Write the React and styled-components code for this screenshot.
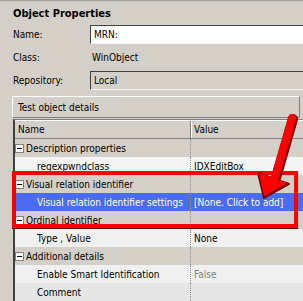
import styled, { createGlobalStyle } from "styled-components";

const GlobalStyle = createGlobalStyle`
  body {
    margin: 0;
    background: #d4d0c8;
    font-family: "DejaVu Sans Condensed", "Liberation Sans", sans-serif;
    font-size: 10px;
    color: #000;
  }
`;

const rows = [
  { type: "group", name: "Description properties" },
  { type: "item", name: "regexpwndclass", value: "IDXEditBox", bg: "#f4f4f4" },
  { type: "group", name: "Visual relation identifier" },
  { type: "item", name: "Visual relation identifier settings", value: "[None. Click to add]", selected: true },
  { type: "group", name: "Ordinal identifier" },
  { type: "item", name: "Type , Value", value: "None", bg: "#f0f0f0" },
  { type: "group", name: "Additional details" },
  { type: "item", name: "Enable Smart Identification", value: "False", muted: true, bg: "#f0f0f0" },
  { type: "item", name: "Comment", value: "", bg: "#e6e6e6" },
];

export default function App() {
  return (
    <>
      <GlobalStyle />
      <Page>
        <TopRule />
        <Title>Object Properties</Title>
        <Form>
          <Label>Name:</Label>
          <Input $editable>MRN:</Input>
          <Label>Class:</Label>
          <Plain>WinObject</Plain>
          <Label>Repository:</Label>
          <Input>Local</Input>
        </Form>
        <Panel>
          <PanelHeader>Test object details</PanelHeader>
          <Grid>
            <HeaderRow>
              <HeaderCell $first>Name</HeaderCell>
              <HeaderCell>Value</HeaderCell>
            </HeaderRow>
            {rows.map((r) => (
              <Row key={r.name} $bg={r.type === "group" ? "#d4d0c8" : r.selected ? "#4a6cf2" : r.bg}>
                <NameCell $indent={r.type === "item"} $selected={r.selected}>
                  {r.type === "group" && <Toggle />}
                  {r.name}
                </NameCell>
                <ValueCell $muted={r.muted} $selected={r.selected}>
                  {r.value}
                </ValueCell>
              </Row>
            ))}
          </Grid>
        </Panel>
        <Highlight />
        <Arrow viewBox="0 0 303 301">
          <line x1="293" y1="119" x2="276" y2="178" stroke="#7a0000" strokeWidth="10" strokeLinecap="round" />
          <polygon points="258,173 289,184 264,198" fill="#7a0000" stroke="#7a0000" strokeWidth="2" strokeLinejoin="round" />
          <line x1="292" y1="118" x2="275" y2="177" stroke="#ff0000" strokeWidth="8" strokeLinecap="round" />
          <polygon points="259,173 287,183 264,196" fill="#ff0000" />
        </Arrow>
      </Page>
    </>
  );
}

const Page = styled.div`
  position: relative;
  width: 303px;
  height: 301px;
  overflow: hidden;
`;

const TopRule = styled.div`
  height: 1px;
  background: #a0a0a0;
  border-bottom: 1px solid #c8c4bc;
`;

const Title = styled.div`
  height: 23px;
  line-height: 23px;
  padding-left: 13px;
  font-size: 11px;
  font-weight: bold;
`;

const Form = styled.div`
  display: grid;
  grid-template-columns: 77px 1fr;
  grid-auto-rows: 19px;
  row-gap: 4px;
  padding-left: 13px;
  align-items: center;
`;

const Label = styled.div``;

const Plain = styled.div`
  padding-left: 2px;
`;

const Input = styled.div`
  height: 19px;
  box-sizing: border-box;
  display: flex;
  align-items: center;
  padding-left: 3px;
  margin-right: -10px;
  background: ${(p) => (p.$editable ? "#fff" : "#d4d0c8")};
  border-top: 1px solid #404040;
  border-left: 1px solid #404040;
  border-bottom: 1px solid #f4f4f4;
`;

const Panel = styled.div`
  margin-top: 6px;
  padding-left: 12px;
`;

const PanelHeader = styled.div`
  width: 288px;
  height: 22px;
  box-sizing: border-box;
  display: flex;
  align-items: center;
  padding-left: 5px;
  border-top: 1px solid #fff;
  border-left: 1px solid #fff;
  border-right: 1px solid #808080;
  border-bottom: 1px solid #808080;
`;

const Grid = styled.div`
  margin-top: 1px;
  margin-left: 1px;
  width: 320px;
  border-top: 1px solid #808080;
  border-left: 2px solid #404040;
`;

const HeaderRow = styled.div`
  display: flex;
  height: 19px;
  box-sizing: border-box;
  border-top: 1px solid #fff;
  border-bottom: 1px solid #808080;
`;

const HeaderCell = styled.div`
  display: flex;
  align-items: center;
  box-sizing: border-box;
  padding-left: ${(p) => (p.$first ? "3px" : "2px")};
  width: ${(p) => (p.$first ? "176px" : "auto")};
  flex: ${(p) => (p.$first ? "none" : "1")};
  border-right: ${(p) => (p.$first ? "1px solid #808080" : "none")};
  border-left: ${(p) => (p.$first ? "none" : "1px solid #fff")};
`;

const Row = styled.div`
  display: flex;
  height: 18px;
  background: ${(p) => p.$bg};
`;

const NameCell = styled.div`
  display: flex;
  align-items: center;
  gap: 2px;
  width: 176px;
  box-sizing: border-box;
  padding-left: ${(p) => (p.$indent ? "22px" : "0")};
  border-right: 1px dotted #909090;
  color: ${(p) => (p.$selected ? "#fff" : "#000")};
  white-space: nowrap;
`;

const ValueCell = styled.div`
  flex: 1;
  display: flex;
  align-items: center;
  padding-left: 3px;
  color: ${(p) => (p.$selected ? "#fff" : p.$muted ? "#808080" : "#000")};
  white-space: nowrap;
`;

const Toggle = styled.span`
  position: relative;
  width: 9px;
  height: 9px;
  box-sizing: border-box;
  background: #fff;
  border: 1px solid #808080;
  flex: none;

  &::after {
    content: "";
    position: absolute;
    left: 1px;
    right: 1px;
    top: 3px;
    height: 1px;
    background: #000;
  }
`;

const Highlight = styled.div`
  position: absolute;
  left: 12px;
  top: 171px;
  width: 286px;
  height: 57px;
  box-sizing: border-box;
  border: 4px solid #ff0000;
  box-shadow: 0 1px 0 #600;
`;

const Arrow = styled.svg`
  position: absolute;
  left: 0;
  top: 0;
  width: 303px;
  height: 301px;
`;
